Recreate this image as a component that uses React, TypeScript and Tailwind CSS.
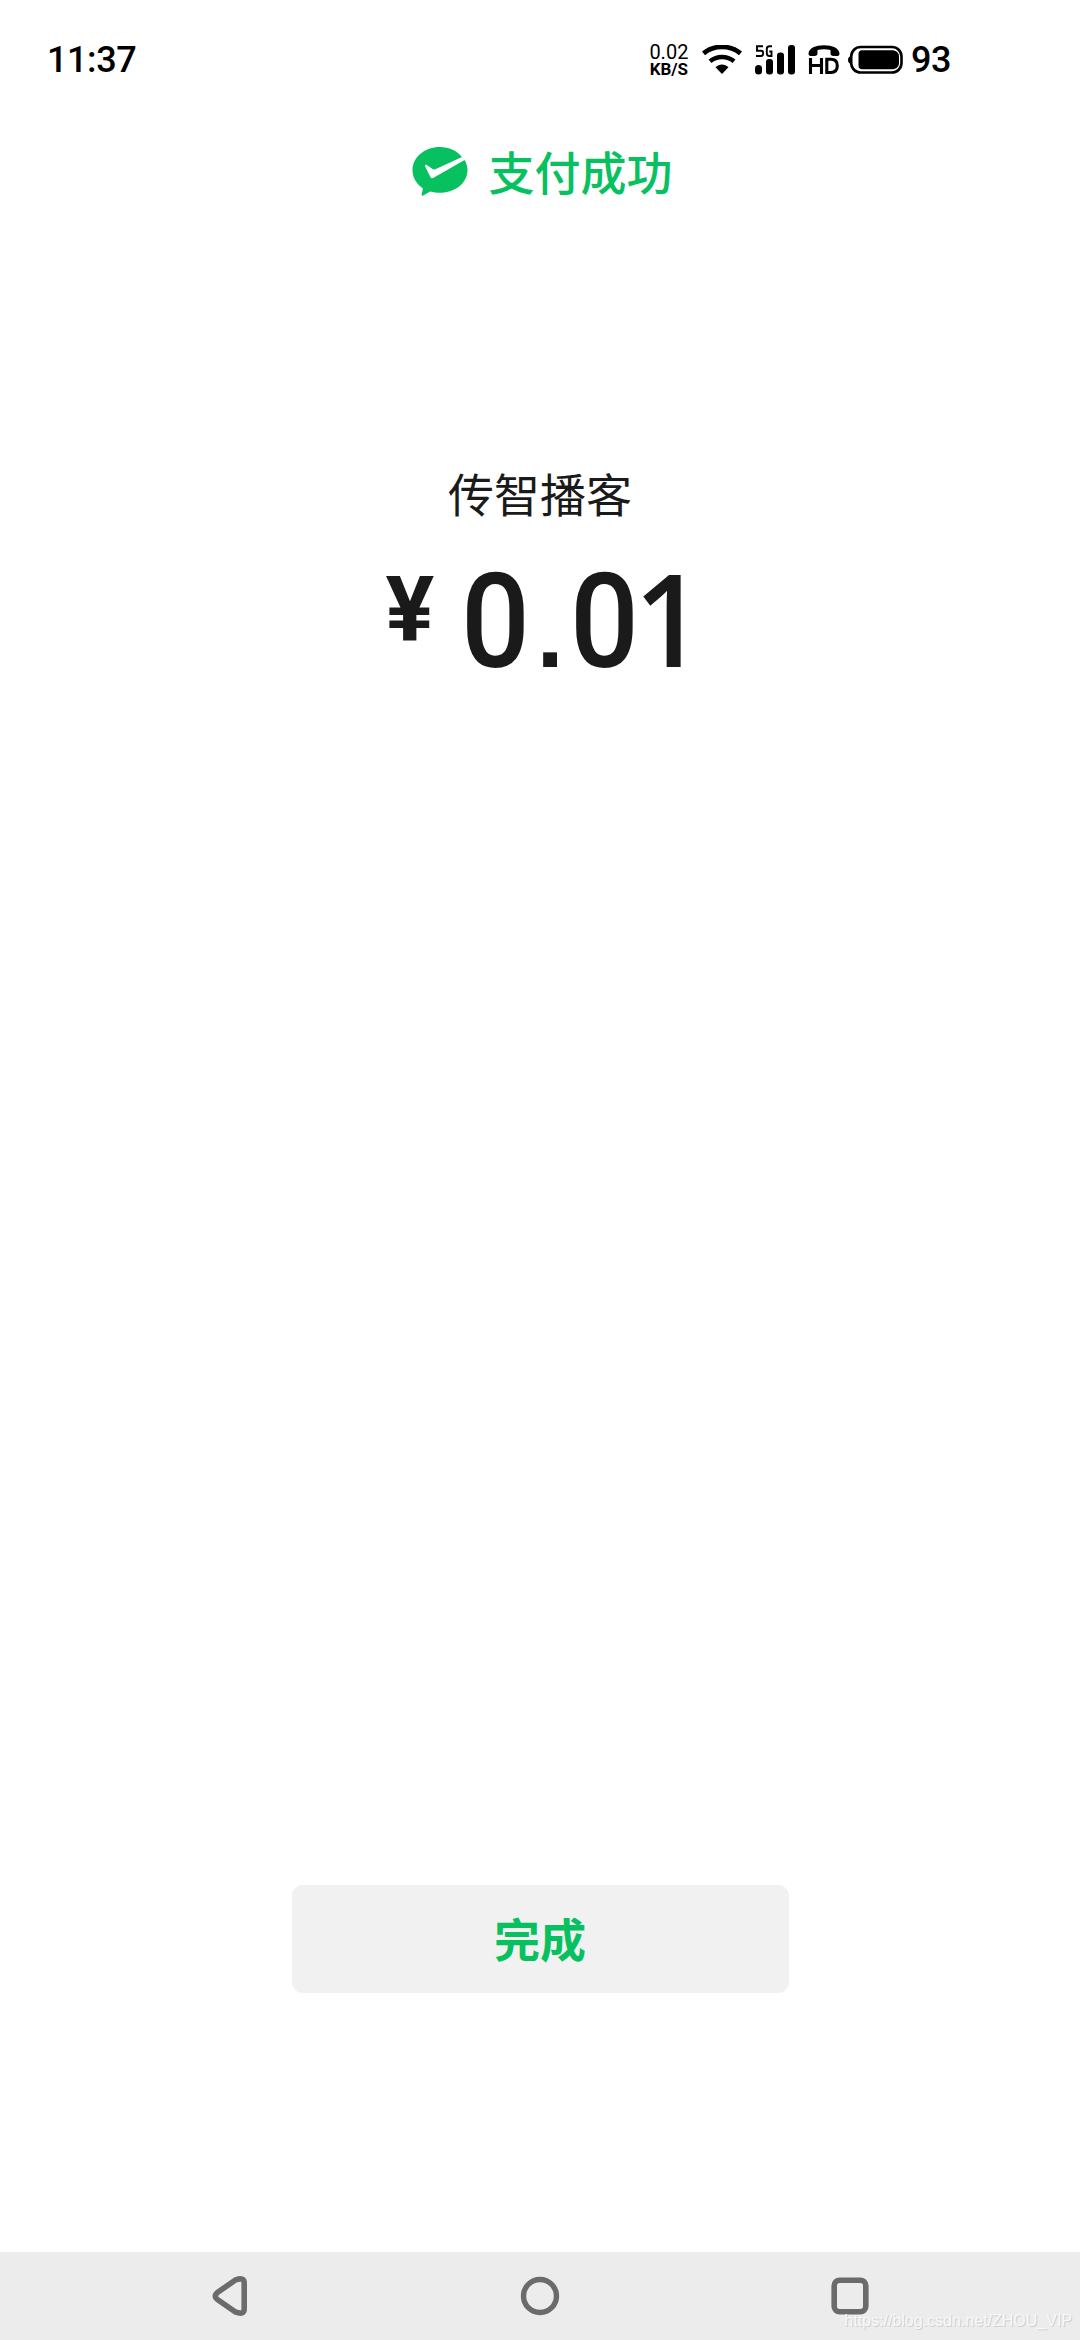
import React from 'react';

function PayIcon() {
  return (
    <svg className="mt-[2px]" width="56" height="52" viewBox="0 0 56 52" fill="none">
      <path
        d="M28 1C12.800 1 .5 11 .5 24.300c0 7.200 3.800 13.600 10.400 18.100l-1.200 5.800c-.2 1.300.5 1.800 1.500 1.200l7-4c3 .9 6.300 1.400 9.800 1.400 15.200 0 27.500-9.900 27.500-22.500 0-3.700-1-7.200-2.900-10.300L22 31.600c-1.800 1-3.100.6-3.900-1.200l-5-10.200c-.5-1.200.6-2 1.600-1.300l6 4.200c.9.500 1.700.5 2.600.1L50 11C45 4.800 37 1 28 1z"
        fill="#07c160"
      />
    </svg>
  );
}

function WifiIcon() {
  return (
    <svg width="40" height="30" viewBox="0 0 40 30" fill="none">
      <path d="M1.500 8.400C12-.3 28-.3 38.500 8.400" stroke="#000" strokeWidth="4.800" />
      <path d="M8 16.200c7-5.600 17-5.600 24 0" stroke="#000" strokeWidth="4.600" />
      <path d="M13.500 22.200c4-3.500 9-3.500 13 0L20 29z" fill="#000" />
    </svg>
  );
}

function SignalIcon() {
  return (
    <svg width="40" height="30" viewBox="0 0 40 30">
      <path d="M8 1.200H2v4.500h4q2.200 0 2.200 2.600T6 11H1M17 1.200h-2.500q-2.700 0-2.700 2.700v4.400q0 2.700 2.700 2.700H16.500V6.500h-2.200" fill="none" stroke="#000" strokeWidth="1.900" />
      <rect x="0" y="20" width="7" height="9.500" rx="3.500" />
      <rect x="11" y="14" width="7" height="15.500" rx="3" />
      <rect x="22" y="7.500" width="7" height="22" rx="3" />
      <rect x="33" y="0" width="7" height="29.500" rx="3" />
    </svg>
  );
}

function HdIcon() {
  return (
    <svg width="32" height="30" viewBox="0 0 32 30">
      <path d="M.5 8.500C1 3 7.500.2 16 .2S31 3 31.500 8.500c0 2-1 2.500-3 2.500h-3c-2 0-3-.8-3-2.700V5.100c-4-1-9-1-13 0v3.200c0 1.900-1 2.700-3 2.700h-3c-2 0-3-.5-3-2.500z" />
      <path d="M2.500 13v16M13.500 13v16M2.500 20.500h11M18.800 14.200V27.500h4q6.500 0 6.500-6.650t-6.500-6.650h-4z" fill="none" stroke="#000" strokeWidth="3.100" />
    </svg>
  );
}

function BatteryIcon() {
  return (
    <svg width="56" height="30" viewBox="0 0 56 30">
      <path d="M4 10.500C1 11 0 13 0 15s1 4 4 4.500z" />
      <rect x="3.200" y="2" width="50.300" height="25.500" rx="9.500" fill="none" stroke="#000" strokeWidth="2.600" />
      <path d="M14 5.300H43.500c5 0 7.500 2.500 7.500 6.500v6c0 4-2.500 6.500-7.500 6.500H14c-2.200 0-3.500-1.300-3.500-3.500V8.800c0-2.200 1.300-3.500 3.500-3.500z" />
    </svg>
  );
}

function StatusBar() {
  return (
    <header className="flex h-[118px] items-start pl-[47px] pt-[39px] font-['Roboto',sans-serif] text-black">
      <span className="text-[36px] leading-[42px] font-medium tracking-[-0.4px]">11:37</span>
      <div className="ml-auto mr-[129px] flex items-start">
        <div className="mt-[4px] flex w-[40px] flex-col items-center">
          <span className="text-[20px] leading-[19px]">0.02</span>
          <span className="text-[17px] leading-[14px] font-bold">KB/S</span>
        </div>
        <div className="ml-[13px] mt-[6px] flex">
          <WifiIcon />
          <div className="ml-[13px]"><SignalIcon /></div>
          <div className="ml-[13px]"><HdIcon /></div>
          <div className="ml-[8px]"><BatteryIcon /></div>
        </div>
        <span className="ml-[7px] text-[36px] leading-[42px] font-medium tracking-[-0.4px]">93</span>
      </div>
    </header>
  );
}

function Amount() {
  return (
    <div className="mt-[35px] flex h-[120px] items-baseline pr-px text-center leading-[120px] text-[#1a1a1a]">
      <span className="mt-[8px] mr-[23px] w-[56px] self-start font-['Roboto',sans-serif] text-[91px] leading-[91px] font-bold">¥</span>
      <span className="flex w-[69px] scale-x-[0.925] justify-center font-['Roboto',sans-serif] text-[131px] font-medium">0</span>
      <span className="w-[40px] font-['Liberation_Sans',sans-serif] text-[98px] font-bold">.</span>
      <span className="flex w-[69px] scale-x-[0.925] justify-center font-['Roboto',sans-serif] text-[131px] font-medium">0</span>
      <span className="flex w-[58px] scale-x-[0.94] justify-center pl-[2px] font-['Open_Sans',sans-serif] text-[129px] font-semibold">1</span>
    </div>
  );
}

function NavBar() {
  return (
    <nav className="relative flex h-[88px] items-center justify-between bg-[#ececec] px-[210px] text-[#6b6b6b]">
      <svg width="40" height="42" viewBox="0 0 40 42" fill="none" stroke="currentColor" strokeWidth="5.600">
        <path d="M25.800 4.800 7.800 17.200q-5 3.800 0 7.600L25.800 37.200Q34.200 40 34.200 34V8Q34.200 2 25.800 4.800z" />
      </svg>
      <svg width="40" height="40" viewBox="0 0 40 40" fill="none" stroke="currentColor" strokeWidth="5.400">
        <circle cx="20" cy="20" r="16.500" />
      </svg>
      <svg width="40" height="40" viewBox="0 0 40 40" fill="none" stroke="currentColor" strokeWidth="5.600">
        <rect x="4.200" y="4.200" width="31.600" height="31.600" rx="5.500" />
      </svg>
      <span className="absolute right-[8px] bottom-[9px] font-['Liberation_Sans',sans-serif] text-[16px] leading-[20px] text-[#f8f8f8] [text-shadow:1px_1px_0_#cfcfcf]">
        https://blog.csdn.net/ZHOU_VIP
      </span>
    </nav>
  );
}

export default function App() {
  return (
    <div className="flex h-[2340px] w-[1080px] flex-col bg-white font-['Noto_Sans_CJK_SC',sans-serif]">
      <StatusBar />
      <div className="flex h-[106px] items-center justify-center pl-[4px] text-[#07c160]">
        <PayIcon />
        <h1 className="ml-[21px] mb-[2px] text-[46px] leading-[60px] font-medium">支付成功</h1>
      </div>
      <main className="flex flex-1 flex-col items-center pt-[238px]">
        <p className="text-[46px] leading-[60px] text-[#1a1a1a]">传智播客</p>
        <Amount />
        <button className="mt-auto mb-[259px] h-[108px] w-[497px] rounded-[11px] bg-[#f1f1f1] pb-[4px] text-[46px] font-bold text-[#07c160]">
          完成
        </button>
      </main>
      <NavBar />
    </div>
  );
}
